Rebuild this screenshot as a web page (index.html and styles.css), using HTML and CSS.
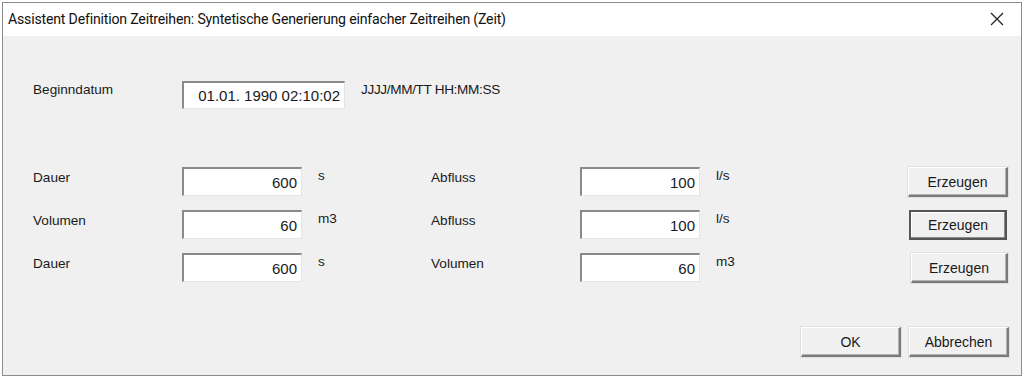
FILE: index.html
```html
<!DOCTYPE html>
<html>
<head>
<meta charset="utf-8">
<link rel="stylesheet" href="styles.css">
</head>
<body>
<div class="window">
  <div class="titlebar">
    <span class="title">Assistent Definition Zeitreihen: Syntetische Generierung einfacher Zeitreihen (Zeit)</span>
    <svg class="close" width="14" height="14" viewBox="0 0 14 14"><path d="M1 1 L13 13 M13 1 L1 13" stroke="#222" stroke-width="1.3" fill="none"/></svg>
  </div>
  <div class="content">
    <div class="daterow">
      <span class="label lbl1">Beginndatum</span>
      <div class="field datefield">01.01. 1990 02:10:02</div>
      <span class="fmt">JJJJ/MM/TT HH:MM:SS</span>
    </div>
    <div class="grid">
      <span class="label">Dauer</span>
      <div class="field">600</div>
      <span class="unit">s</span>
      <span class="label">Abfluss</span>
      <div class="field">100</div>
      <span class="unit">l/s</span>
      <div class="btn">Erzeugen</div>

      <span class="label">Volumen</span>
      <div class="field">60</div>
      <span class="unit">m3</span>
      <span class="label">Abfluss</span>
      <div class="field">100</div>
      <span class="unit">l/s</span>
      <div class="btn focused">Erzeugen</div>

      <span class="label">Dauer</span>
      <div class="field">600</div>
      <span class="unit">s</span>
      <span class="label">Volumen</span>
      <div class="field">60</div>
      <span class="unit">m3</span>
      <div class="btn shifted">Erzeugen</div>
    </div>
    <div class="footer">
      <div class="btn">OK</div>
      <div class="btn">Abbrechen</div>
    </div>
  </div>
</div>
</body>
</html>
```
FILE: styles.css
```css
html, body {
  margin: 0;
  padding: 0;
  background: #ffffff;
}
body {
  width: 1024px;
  height: 379px;
  overflow: hidden;
  font-family: "Liberation Sans", Arial, sans-serif;
}
.window {
  position: relative;
  margin: 2px 0 0 2px;
  width: 1020px;
  height: 374px;
  border: 1px solid #8c8c8c;
  background: #f0f0f0;
  box-sizing: border-box;
}
.titlebar {
  height: 33px;
  background: #ffffff;
  display: flex;
  align-items: center;
  justify-content: space-between;
  padding: 0 17px 0 5px;
}
.title {
  font-family: Roboto, "Noto Sans", sans-serif;
  font-size: 14.1px;
  color: #111;
  letter-spacing: -0.18px;
  margin-top: -2px;
}
.close {
  margin-top: -1px;
}
.content {
  padding: 0 0 0 30px;
  font-size: 13.6px;
  color: #1a1a1a;
}
.daterow {
  display: flex;
  align-items: flex-start;
  margin-top: 45px;
  height: 27px;
}
.label {
  padding-top: 3px;
}
.lbl1 {
  width: 149px;
  padding-top: 1px;
}
.field {
  background: #ffffff;
  box-sizing: border-box;
  height: 29px;
  border-top: 2px solid #8a8a8a;
  border-left: 2px solid #8a8a8a;
  border-right: 1px solid #e4e4e4;
  border-bottom: 1px solid #e4e4e4;
  text-align: right;
  padding: 5px 4px 0 0;
  font-size: 15px;
}
.datefield {
  width: 163px;
  height: 28px;
  padding-top: 4px;
}
.fmt {
  margin-left: 16px;
  padding-top: 1px;
  font-size: 13.6px;
  letter-spacing: -0.35px;
}
.grid {
  display: grid;
  grid-template-columns: 149px 120px 129px 149px 120px 208px 100px;
  grid-auto-rows: 29px;
  row-gap: 14px;
  margin-top: 59px;
  align-items: start;
}
.unit {
  padding-left: 16px;
  padding-top: 1px;
}
.btn {
  box-sizing: border-box;
  height: 30px;
  width: 100px;
  background: #f0f0f0;
  border-top: 1px solid #ffffff;
  border-left: 1px solid #ffffff;
  border-right: 2px solid #7a7a7a;
  border-bottom: 2px solid #7a7a7a;
  box-shadow: inset -1px -1px 0 #b4b4b4, 0 0 0 1px #e0e0e0;
  display: flex;
  align-items: center;
  justify-content: center;
  font-size: 14px;
}
.btn.focused {
  border: 2px solid #555;
  box-shadow: inset -1px -1px 0 #8a8a8a, inset 1px 1px 0 #fff;
  width: 98px;
  margin-left: 1px;
}
.btn.shifted {
  margin-left: 3px;
  width: 97px;
}
.footer {
  display: flex;
  gap: 8px;
  justify-content: flex-end;
  margin-top: 45px;
  padding-right: 12px;
}
```
